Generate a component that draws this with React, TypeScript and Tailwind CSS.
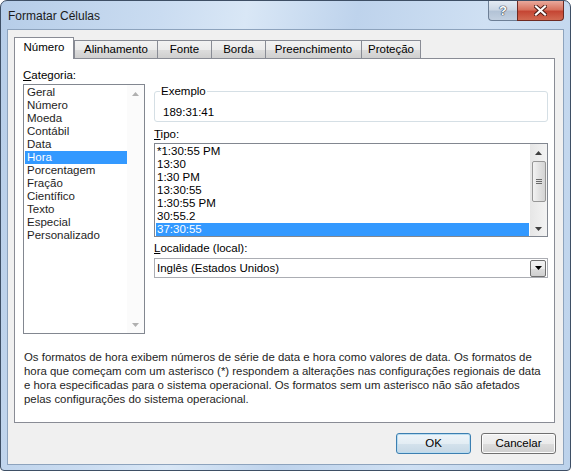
import React from 'react';

const categorias = ['Geral', 'Número', 'Moeda', 'Contábil', 'Data', 'Hora', 'Porcentagem', 'Fração', 'Científico', 'Texto', 'Especial', 'Personalizado'];
const tipos = ['*1:30:55 PM', '13:30', '1:30 PM', '13:30:55', '1:30:55 PM', '30:55.2', '37:30:55'];

const abas = [
  { nome: 'Alinhamento', cls: 'w-[83px]' },
  { nome: 'Fonte', cls: 'w-[54px]' },
  { nome: 'Borda', cls: 'w-[54px]' },
  { nome: 'Preenchimento', cls: 'w-[96px]' },
  { nome: 'Proteção', cls: 'w-[60px] border-r' },
];

function Seta({ up, disabled }: { up?: boolean; disabled?: boolean }) {
  return (
    <svg width="7" height="4" viewBox="0 0 7 4">
      <path d={up ? 'M0 4 L3.5 0 L7 4Z' : 'M0 0 L3.5 4 L7 0Z'} fill={disabled ? '#b0b0b0' : '#3f3f3f'} />
    </svg>
  );
}

function TitleButtons() {
  return (
    <div className="flex h-[20px]">
      <div className="flex w-[29px] items-center justify-center rounded-bl-[4px] border border-t-0 border-r-0 border-[#6d7f96] bg-[linear-gradient(180deg,#e4ebf3_0%,#cdd8e5_45%,#b3c3d6_55%,#c2d0e0_100%)]">
        <span className="text-[13px] font-bold leading-none text-white [text-shadow:0_0_1px_#2d3b4d,0_0_1px_#2d3b4d,0_0_1px_#2d3b4d]">?</span>
      </div>
      <div className="flex w-[47px] items-center justify-center rounded-br-[4px] border border-t-0 border-[#6e2a22] bg-[linear-gradient(180deg,#e9a99c_0%,#d8735f_45%,#c54634_55%,#d26a52_100%)]">
        <svg width="13" height="11" viewBox="0 0 13 11">
          <path d="M2 1.5 L11 9.5 M11 1.5 L2 9.5" stroke="#4a1a14" strokeWidth="4" strokeLinecap="square" />
          <path d="M2 1.5 L11 9.5 M11 1.5 L2 9.5" stroke="#ffffff" strokeWidth="2.2" strokeLinecap="square" />
        </svg>
      </div>
    </div>
  );
}

export default function App() {
  return (
    <div className="h-[471px] w-[571px] overflow-hidden bg-white font-['Liberation_Sans',Arial,sans-serif] text-[11.5px] text-black">
      <div className="flex h-full w-full flex-col rounded-t-[7px] rounded-b-[4px] border border-[#3e4f65] bg-[linear-gradient(100deg,#b6cde8_0%,#cadcf1_25%,#d9e7f6_38%,#bed3ec_55%,#cfe0f3_75%,#bcd2eb_100%)] px-[6px] pb-[5px]">
        {/* barra de título */}
        <div className="flex h-[28px] items-start justify-between">
          <div className="pl-[1px] pt-[8px] text-[12px] leading-[15px] text-[#1a1a1a]">Formatar Células</div>
          <TitleButtons />
        </div>

        {/* área do cliente */}
        <div className="flex flex-1 flex-col border border-[#8da3bd] bg-[#f0f0f0]">
          {/* abas */}
          <div className="ml-[6px] mt-[7px] flex h-[21px] items-end">
            <div className="relative z-10 -mb-[1px] flex h-[22px] w-[60px] items-center justify-center border border-b-0 border-[#898c95] bg-white pb-[1px]">
              Número
            </div>
            {abas.map((a) => (
              <div
                key={a.nome}
                className={`flex h-[18px] items-center justify-center border-l border-t border-[#898c95] bg-[linear-gradient(180deg,#f2f2f2_0%,#ebebeb_50%,#dddddd_51%,#cfcfcf_100%)] ${a.cls}`}
              >
                {a.nome}
              </div>
            ))}
          </div>

          {/* painel */}
          <div className="ml-[6px] mr-[8px] flex h-[365px] flex-col border border-[#898c95] bg-white pl-[8px] pt-[9px]">
            <div className="flex items-start gap-[9px]">
              {/* categoria */}
              <div className="flex w-[122px] flex-col">
                <div className="h-[15px] leading-[15px]"><u>C</u>ategoria:</div>
                <div className="mt-[1px] flex h-[250px] border border-[#828790]">
                  <div className="flex-1 pl-[1px] pt-[1px]">
                    {categorias.map((c) => (
                      <div
                        key={c}
                        className={`h-[13px] pl-[2px] leading-[13px] ${c === 'Hora' ? 'bg-[#3399ff] text-white' : 'text-[#1e1e1e]'}`}
                      >
                        {c}
                      </div>
                    ))}
                  </div>
                  <div className="flex w-[17px] flex-col items-center justify-between bg-[#fbfbfb] pb-[6px] pt-[7px]">
                    <Seta up disabled />
                    <Seta disabled />
                  </div>
                </div>
              </div>

              {/* lado direito */}
              <div className="flex w-[394px] flex-col">
                <div className="relative mt-[23px] h-[31px] rounded-[3px] border border-[#d5dfe5] pl-[8px] pt-[13px]">
                  <span className="absolute -top-[8px] left-[5px] bg-white px-[1px] leading-[15px]">Exemplo</span>
                  <div className="leading-[15px]">189:31:41</div>
                </div>

                <div className="mt-[5px] h-[15px] leading-[15px]"><u>T</u>ipo:</div>
                <div className="mt-[1px] flex h-[94px] border border-[#828790]">
                  <div className="flex-1 pl-[1px] pt-[1px]">
                    {tipos.map((t) => (
                      <div
                        key={t}
                        className={`h-[13px] pl-[1px] leading-[13px] ${t === '37:30:55' ? 'bg-[#3399ff] text-white' : ''}`}
                      >
                        {t}
                      </div>
                    ))}
                  </div>
                  <div className="ml-[1px] flex w-[17px] flex-col items-center bg-[linear-gradient(90deg,#e6e6e6,#f3f3f3)]">
                    <div className="flex h-[17px] items-center justify-center pt-[1px]">
                      <Seta up />
                    </div>
                    <div className="flex h-[41px] w-[14px] items-center justify-center rounded-[2px] border border-[#979797] bg-[linear-gradient(90deg,#f3f3f3,#e2e2e2_50%,#d4d4d4)]">
                      <div className="flex flex-col gap-[1px]">
                        <div className="h-[1px] w-[6px] bg-[#6a6a6a]" />
                        <div className="h-[1px] w-[6px] bg-[#6a6a6a]" />
                        <div className="h-[1px] w-[6px] bg-[#6a6a6a]" />
                      </div>
                    </div>
                    <div className="flex flex-1 items-end justify-center pb-[5px]">
                      <Seta />
                    </div>
                  </div>
                </div>

                <div className="mt-[4px] h-[15px] leading-[15px]"><u>L</u>ocalidade (local):</div>
                <div className="mt-[2px] flex h-[20px] items-center border border-[#abadb3] pl-[2px] pr-[1px]">
                  <div className="flex-1 leading-[15px]">Inglês (Estados Unidos)</div>
                  <div className="flex h-[17px] w-[16px] items-center justify-center rounded-[2px] border border-[#707070] bg-[linear-gradient(180deg,#f2f2f2_0%,#ebebeb_50%,#dddddd_51%,#cfcfcf_100%)]">
                    <svg width="7" height="4" viewBox="0 0 7 4">
                      <path d="M0 0 L3.5 4 L7 0Z" fill="#000" />
                    </svg>
                  </div>
                </div>
              </div>
            </div>

            {/* descrição */}
            <div className="mt-[16px] pl-[1px] text-[11.4px] leading-[14px] text-[#1e1e1e]">
              <div className="whitespace-nowrap">Os formatos de hora exibem números de série de data e hora como valores de data. Os formatos de</div>
              <div className="whitespace-nowrap">hora que começam com um asterisco (*) respondem a alterações nas configurações regionais de data</div>
              <div className="whitespace-nowrap">e hora especificadas para o sistema operacional. Os formatos sem um asterisco não são afetados</div>
              <div className="whitespace-nowrap">pelas configurações do sistema operacional.</div>
            </div>
          </div>

          {/* botões */}
          <div className="mr-[7px] mt-[10px] flex justify-end gap-[10px]">
            <button className="h-[21px] w-[75px] rounded-[3px] border border-[#3c7fb1] bg-[linear-gradient(180deg,#eef5fa_0%,#e3edf4_50%,#d4e2ec_51%,#c6d8e6_100%)] text-[11.5px] shadow-[inset_0_0_0_1px_#b9dcf0]">
              OK
            </button>
            <button className="h-[21px] w-[75px] rounded-[3px] border border-[#707070] bg-[linear-gradient(180deg,#f2f2f2_0%,#ebebeb_50%,#dddddd_51%,#cfcfcf_100%)] text-[11.5px] shadow-[inset_0_0_0_1px_#fcfcfc]">
              Cancelar
            </button>
          </div>
        </div>
      </div>
    </div>
  );
}
